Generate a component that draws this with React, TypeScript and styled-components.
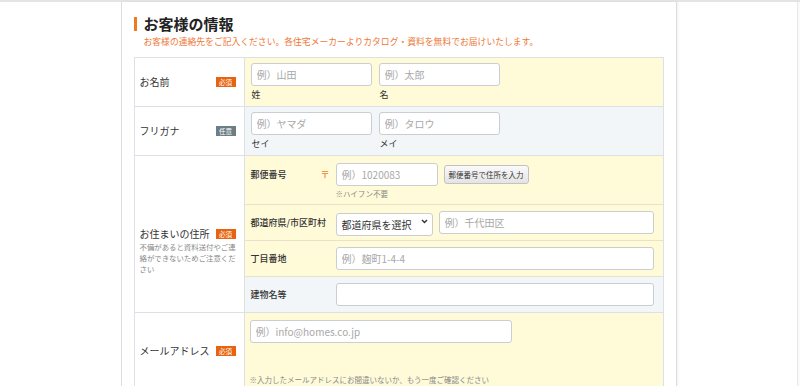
import React from "react";
import styled, { createGlobalStyle } from "styled-components";

const GlobalStyle = createGlobalStyle`
  body {
    margin: 0;
    background: #fff;
    font-family: "Noto Sans CJK JP", "Noto Sans", sans-serif;
    color: #333;
  }
`;

const Shell = styled.div`
  display: flex;
  flex-direction: column;
  height: 386px;
  overflow: hidden;
`;

const TopStrip = styled.div`
  display: flex;
  height: 5px;
  border-bottom: 2px solid #e4e4e4;
`;

const StripSeg = styled.div<{ $w?: number; $light?: boolean }>`
  flex: ${(p) => (p.$w ? `0 0 ${p.$w}px` : "1")};
  background: ${(p) => (p.$light ? "#fbfbfb" : "#efefef")};
`;

const Body = styled.div`
  display: flex;
  flex: 1;
`;

const Viewport = styled.div`
  flex: 1;
  display: flex;
  justify-content: center;
`;

const EdgeBar = styled.div`
  width: 2px;
  border-left: 1px solid #e6e8ea;
  background: #fafafa;
`;

const Card = styled.div`
  box-sizing: border-box;
  width: 556px;
  border-left: 1px solid #d9dee2;
  border-right: 1px solid #d9dee2;
  box-shadow: 1px 0 2px rgba(0, 0, 0, 0.06);
  padding: 0 12px;
`;

const Heading = styled.h2`
  display: flex;
  align-items: center;
  gap: 7px;
  margin: 13px 0 0;
  font-size: 15px;
  line-height: 17px;
  font-weight: 700;
  color: #222;

  &::before {
    content: "";
    width: 3px;
    height: 14px;
    background: #f07a1e;
  }
`;

const Lead = styled.p`
  margin: 4px 0 9px 10px;
  font-size: 8.8px;
  line-height: 12px;
  color: #ee7838;
`;

const Table = styled.div`
  border: 1px solid #dbe1e5;
  border-bottom: none;
`;

const Row = styled.div`
  display: grid;
  grid-template-columns: 110px 1fr;
  & + & {
    border-top: 1px solid #dbe1e5;
  }
`;

const LabelCell = styled.div<{ $pushDown?: number }>`
  display: flex;
  flex-direction: column;
  justify-content: center;
  padding: ${(p) => p.$pushDown || 0}px 8px 0 5px;
  background: #fff;
  border-right: 1px solid #dbe1e5;
`;

const LabelLine = styled.div`
  display: flex;
  align-items: center;
  justify-content: space-between;
  font-size: 10px;
  line-height: 14px;
  color: #333;
`;

const Badge = styled.span<{ $optional?: boolean }>`
  display: inline-flex;
  align-items: center;
  justify-content: center;
  width: 20px;
  height: 10px;
  font-size: 6.5px;
  line-height: 10px;
  color: #fff;
  background: ${(p) => (p.$optional ? "#6d7d86" : "#e8630f")};
`;

const LabelNote = styled.div`
  margin-right: -3px;
  font-size: 7.4px;
  line-height: 11px;
  color: #888;
`;

const FieldCell = styled.div<{ $tone?: "yellow" | "blue" }>`
  background: ${(p) => (p.$tone === "blue" ? "#f2f6f8" : "#fffbd9")};
  padding: ${(p) => (p.$tone ? "5px 6px 6px" : "0")};
`;

const NamePair = styled.div`
  display: flex;
  gap: 7px;
`;

const NameField = styled.div`
  display: flex;
  flex-direction: column;
`;

const Input = styled.input<{ $w?: number }>`
  box-sizing: border-box;
  width: ${(p) => (p.$w ? `${p.$w}px` : "100%")};
  height: 23px;
  padding: 0 5px;
  border: 1px solid #c9ced2;
  border-radius: 3px;
  background: #fff;
  font-family: inherit;
  font-size: 10px;
  color: #333;
  outline: none;

  &::placeholder {
    color: #a8a8a8;
  }
`;

const SubCaption = styled.span`
  margin: 3px 0 0 1px;
  font-size: 9px;
  line-height: 11px;
  color: #333;
`;

const SubRow = styled.div<{ $tone?: "yellow" | "blue"; $h: number; $top?: boolean }>`
  display: grid;
  grid-template-columns: 79px 1fr;
  align-items: ${(p) => (p.$top ? "start" : "center")};
  column-gap: 6px;
  box-sizing: border-box;
  height: ${(p) => p.$h}px;
  padding: ${(p) => (p.$top ? "7px" : "0")} 9px 0 6px;
  background: ${(p) => (p.$tone === "blue" ? "#f2f6f8" : "#fffbd9")};
  & + & {
    border-top: 1px solid #e8e3c8;
  }
`;

const SubLabel = styled.div`
  display: flex;
  align-items: center;
  justify-content: space-between;
  height: 22px;
  font-size: 9px;
  font-weight: 500;
  color: #333;
`;

const Postal = styled.span`
  font-size: 9px;
  color: #f07a1e;
`;

const FieldLine = styled.div`
  display: flex;
  align-items: center;
  gap: 6px;
`;

const Hint = styled.div`
  margin-top: 2px;
  font-size: 7.5px;
  line-height: 11px;
  color: #888;
`;

const ZipButton = styled.button`
  height: 19px;
  padding: 0 4px;
  border: 1px solid #c2c2c2;
  border-radius: 3px;
  background: linear-gradient(#fafafa, #e4e4e4);
  font-family: inherit;
  font-size: 7.5px;
  color: #333;
`;

const SelectWrap = styled.div`
  position: relative;
  flex: 0 0 97px;
`;

const Select = styled.select`
  appearance: none;
  box-sizing: border-box;
  width: 100%;
  height: 23px;
  padding: 0 5px;
  border: 1px solid #c9ced2;
  border-radius: 3px;
  background: #fff;
  font-family: inherit;
  font-size: 10px;
  color: #333;
`;

const Chevron = styled.svg`
  position: absolute;
  right: 5px;
  top: 9px;
  pointer-events: none;
`;

const MailCell = styled.div`
  display: flex;
  flex-direction: column;
  padding: 7px 6px 4px 5px;
  background: #fffbd9;
`;

const MailHint = styled(Hint)`
  margin-top: 31px;
`;

const App: React.FC = () => {
  return (
    <>
      <GlobalStyle />
      <Shell>
        <TopStrip>
          <StripSeg $w={111} />
          <StripSeg $light />
          <StripSeg $w={135} />
        </TopStrip>
        <Body>
          <Viewport>
            <Card>
              <Heading>お客様の情報</Heading>
              <Lead>お客様の連絡先をご記入ください。各住宅メーカーよりカタログ・資料を無料でお届けいたします。</Lead>
              <Table>
                <Row>
                  <LabelCell>
                    <LabelLine>
                      お名前<Badge>必須</Badge>
                    </LabelLine>
                  </LabelCell>
                  <FieldCell $tone="yellow">
                    <NamePair>
                      <NameField>
                        <Input $w={121} placeholder="例）山田" />
                        <SubCaption>姓</SubCaption>
                      </NameField>
                      <NameField>
                        <Input $w={121} placeholder="例）太郎" />
                        <SubCaption>名</SubCaption>
                      </NameField>
                    </NamePair>
                  </FieldCell>
                </Row>
                <Row>
                  <LabelCell>
                    <LabelLine>
                      フリガナ<Badge $optional>任意</Badge>
                    </LabelLine>
                  </LabelCell>
                  <FieldCell $tone="blue">
                    <NamePair>
                      <NameField>
                        <Input $w={121} placeholder="例）ヤマダ" />
                        <SubCaption>セイ</SubCaption>
                      </NameField>
                      <NameField>
                        <Input $w={121} placeholder="例）タロウ" />
                        <SubCaption>メイ</SubCaption>
                      </NameField>
                    </NamePair>
                  </FieldCell>
                </Row>
                <Row>
                  <LabelCell $pushDown={32}>
                    <LabelLine>
                      お住まいの住所<Badge>必須</Badge>
                    </LabelLine>
                    <LabelNote>不備があると資料送付やご連絡ができないためご注意ください</LabelNote>
                  </LabelCell>
                  <FieldCell>
                    <SubRow $tone="yellow" $h={48} $top>
                      <SubLabel>
                        郵便番号<Postal>〒</Postal>
                      </SubLabel>
                      <div>
                        <FieldLine>
                          <Input $w={102} placeholder="例）1020083" />
                          <ZipButton type="button">郵便番号で住所を入力</ZipButton>
                        </FieldLine>
                        <Hint>※ハイフン不要</Hint>
                      </div>
                    </SubRow>
                    <SubRow $tone="yellow" $h={36}>
                      <SubLabel>都道府県/市区町村</SubLabel>
                      <FieldLine>
                        <SelectWrap>
                          <Select defaultValue="">
                            <option value="">都道府県を選択</option>
                          </Select>
                          <Chevron width="7" height="5" viewBox="0 0 7 5">
                            <path d="M1 1l2.5 2.5L6 1" fill="none" stroke="#333" strokeWidth="1.4" />
                          </Chevron>
                        </SelectWrap>
                        <Input placeholder="例）千代田区" />
                      </FieldLine>
                    </SubRow>
                    <SubRow $tone="yellow" $h={36}>
                      <SubLabel>丁目番地</SubLabel>
                      <Input placeholder="例）麹町1-4-4" />
                    </SubRow>
                    <SubRow $tone="blue" $h={36}>
                      <SubLabel>建物名等</SubLabel>
                      <Input />
                    </SubRow>
                  </FieldCell>
                </Row>
                <Row>
                  <LabelCell>
                    <LabelLine>
                      メールアドレス<Badge>必須</Badge>
                    </LabelLine>
                  </LabelCell>
                  <MailCell>
                    <Input $w={262} placeholder="例）info@homes.co.jp" />
                    <MailHint>※入力したメールアドレスにお間違いないか、もう一度ご確認ください</MailHint>
                  </MailCell>
                </Row>
              </Table>
            </Card>
          </Viewport>
          <EdgeBar />
        </Body>
      </Shell>
    </>
  );
};

export default App;
